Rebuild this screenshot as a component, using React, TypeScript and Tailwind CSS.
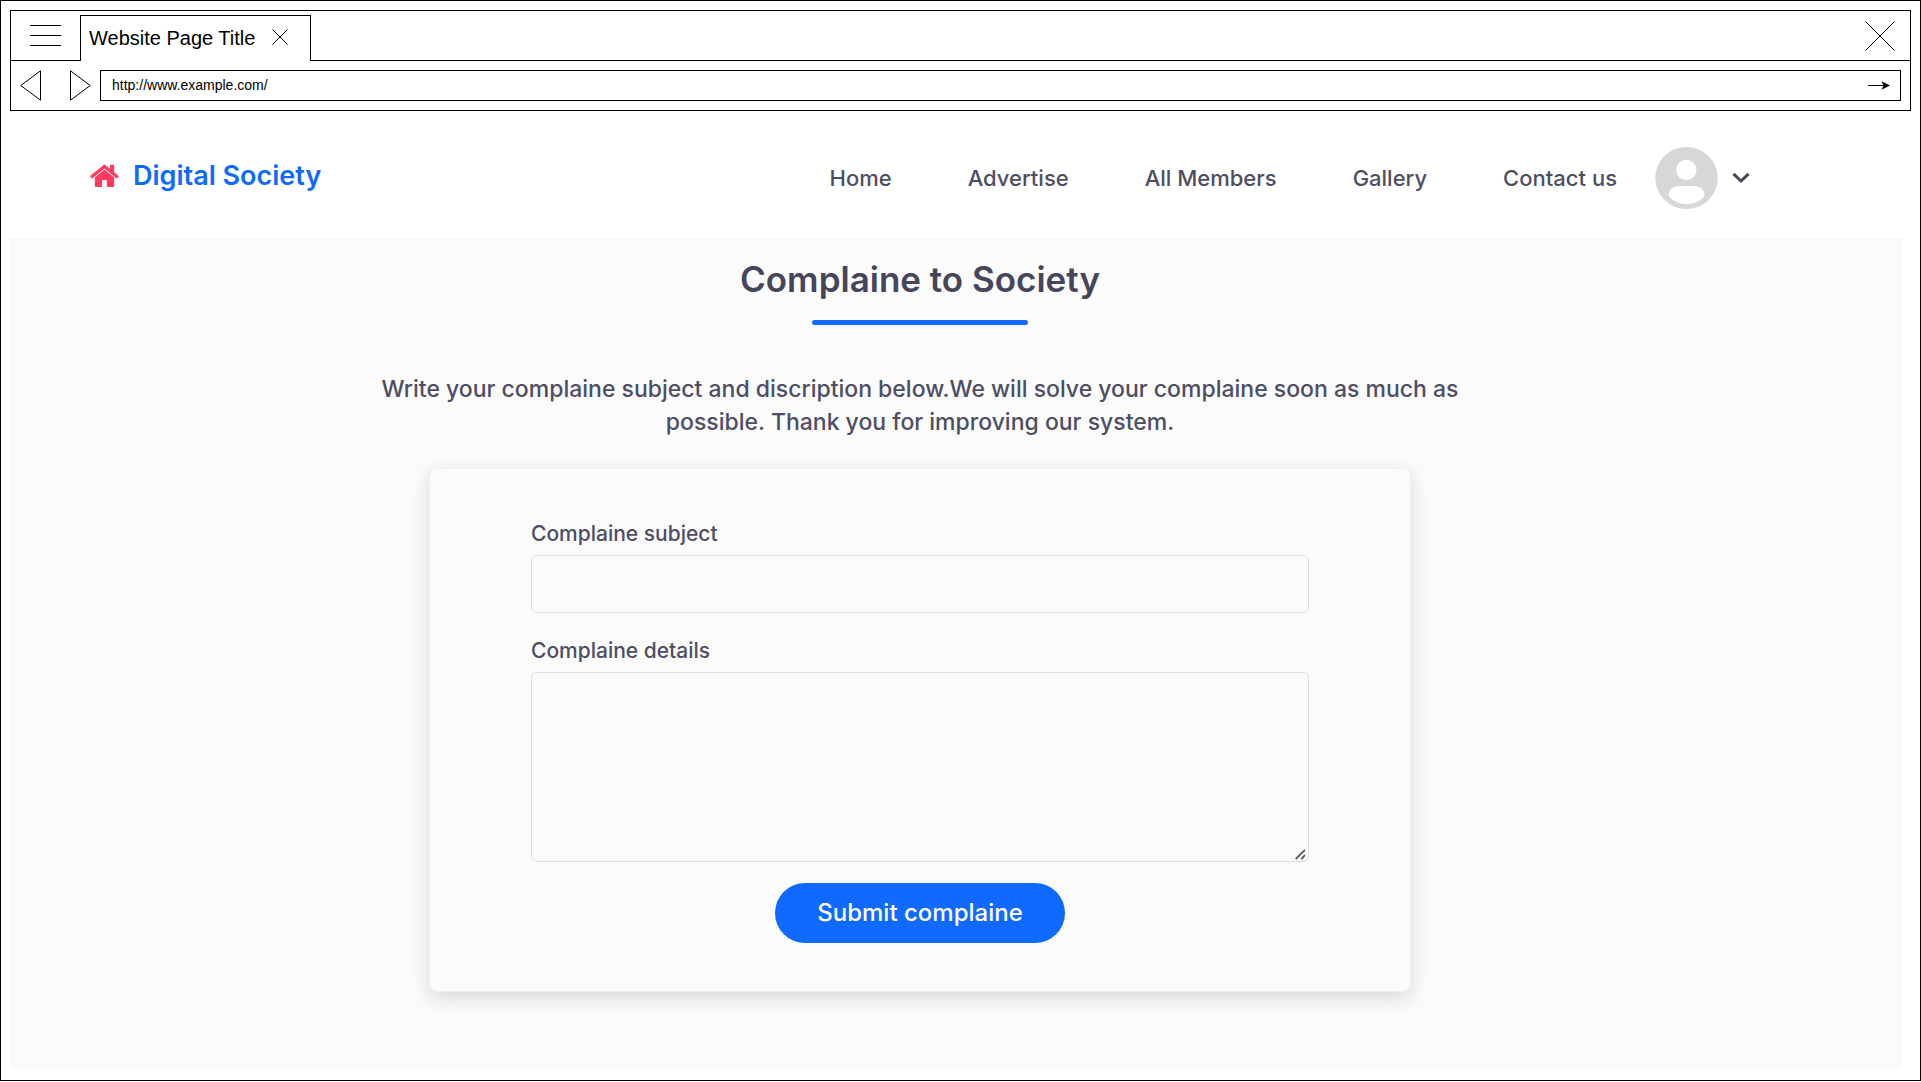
import React from "react";

const navLinks = ["Home", "Advertise", "All Members", "Gallery", "Contact us"];

function BrowserChrome() {
  return (
    <div className="border border-black font-['Liberation_Sans',sans-serif] text-black">
      <div className="flex h-[50px] items-stretch">
        <div className="flex w-[69px] items-center justify-center border-b border-black">
          <button type="button" aria-label="Menu">
            <svg width="31" height="22" viewBox="0 0 31 22" stroke="black" fill="none" shapeRendering="crispEdges">
              <path d="M0 .5h31M0 10.5h31M0 20.5h31" />
            </svg>
          </button>
        </div>
        <div className="mt-1 flex w-[231px] items-center gap-[17px] border-x border-t border-black pb-1 pl-2">
          <span className="pt-0.5 text-xl leading-6 whitespace-nowrap">Website Page Title</span>
          <button type="button" aria-label="Close tab">
            <svg width="16" height="16" viewBox="0 0 16 16" stroke="black" fill="none">
              <path d="M.5 .5l15 15M15.500 .5l-15 15" />
            </svg>
          </button>
        </div>
        <div className="flex flex-1 items-center justify-end border-b border-black pr-[15px]">
          <button type="button" aria-label="Close window">
            <svg width="30" height="30" viewBox="0 0 30 30" stroke="black" fill="none">
              <path d="M.5 .5l29 29M29.500 .5l-29 29" />
            </svg>
          </button>
        </div>
      </div>
      <div className="flex h-[49px] items-center pr-[9px] pl-[9px]">
        <button type="button" aria-label="Back" className="mr-7">
          <svg width="22" height="31" viewBox="0 0 22 31" stroke="black" fill="none">
            <path d="M20.500 .8v29.400L.8 15.500z" />
          </svg>
        </button>
        <button type="button" aria-label="Forward" className="mr-2">
          <svg width="22" height="31" viewBox="0 0 22 31" stroke="black" fill="none">
            <path d="M.5 .8v29.400L20.200 15.500z" />
          </svg>
        </button>
        <div className="flex h-[31px] flex-1 items-center border border-black pr-[10px] pl-[11px]">
          <input
            type="text"
            aria-label="Address"
            defaultValue="http://www.example.com/"
            className="min-w-0 flex-1 bg-transparent pb-0.5 text-sm leading-5 outline-none"
          />
          <button type="button" aria-label="Go">
            <svg width="22" height="9" viewBox="0 0 22 9">
              <path d="M0 4.500h16" stroke="black" />
              <path d="M22 4.500L13.500 8.800l2-4.300-2-4.300z" fill="black" />
            </svg>
          </button>
        </div>
      </div>
    </div>
  );
}

function SiteHeader() {
  return (
    <header className="mr-[9px] flex h-[127px] items-center justify-between pt-1.5 pr-[152px] pl-20">
      <a href="#" className="flex items-center gap-[14px] pb-1 text-[27px] leading-10 font-semibold text-[#106aff]">
        <svg width="29" height="24" viewBox="0 0 30 24" fill="#ff3a5c" aria-hidden="true">
          <path d="M14.300 5.900L5 13.600v8.600c0 .7.500 1.300 1.200 1.300h5.400c.5 0 .9-.4.900-.9v-5.500c0-.5.400-.9.900-.9h3.100c.5 0 .9.400.9.900v5.500c0 .5.400.9.900.9h5.400c.7 0 1.300-.6 1.300-1.300v-8.600l-9.300-7.700c-.4-.3-1-.3-1.400 0z" />
          <path d="M29.200 11.700L25 8.200V1c0-.4-.3-.7-.7-.7h-2.900c-.4 0-.7.300-.7.700v3.700L16.200.9c-.7-.6-1.800-.6-2.500 0L.5 11.700c-.3.300-.4.700-.1 1l1.300 1.600c.2.300.7.300 1 .1L14.300 4.800c.4-.3 1-.3 1.400 0l11.500 9.600c.3.200.8.200 1-.1l1.300-1.600c.3-.3.200-.700-.3-1z" />
        </svg>
        <span>Digital Society</span>
      </a>
      <div className="flex items-center">
        <nav className="flex gap-[76px] text-[22px] leading-8 font-medium text-[#4d4e63]">
          {navLinks.map((link) => (
            <a key={link} href="#" className="whitespace-nowrap">
              {link}
            </a>
          ))}
        </nav>
        <button type="button" aria-label="Account" className="ml-[38px] flex items-center gap-[14px]">
          <svg width="63" height="62" viewBox="0 0 63 62">
            <ellipse cx="31.500" cy="31" rx="31.300" ry="31" fill="#d7d7d7" />
            <circle cx="31.300" cy="23" r="10.200" fill="white" />
            <path d="M13.500 48c0-5.500 5-9 10.500-9h15c5.500 0 10.500 3.500 10.500 9 0 2.500-7 9-18 9s-18-6.500-18-9z" fill="white" />
          </svg>
          <svg width="18" height="12" viewBox="0 0 18 12" fill="none" stroke="#45465c" strokeWidth="3">
            <path d="M1.500 1.800L9 9l7.500-7.200" />
          </svg>
        </button>
      </div>
    </header>
  );
}

function ComplaintForm() {
  const field = "block w-full rounded-md border border-[#dedede] bg-[#fbfbfb] px-4 outline-none";
  return (
    <form
      onSubmit={(event) => event.preventDefault()}
      className="mt-[29px] flex w-full max-w-[982px] flex-col items-center rounded-lg border border-[#f0f0f0] bg-[#fbfbfb] px-[101px] pt-[49px] pb-12 text-[#4d4e63] shadow-[0_6px_20px_rgba(0,0,0,0.14)]"
    >
      <div className="w-full">
        <label htmlFor="subject" className="mb-[5px] block text-[21px] leading-8 font-medium">
          Complaine subject
        </label>
        <input id="subject" type="text" className={field + " h-[58px]"} />
      </div>
      <div className="mt-[22px] w-full">
        <label htmlFor="details" className="mb-[5px] block text-[21px] leading-8 font-medium">
          Complaine details
        </label>
        <div className="relative">
          <textarea
            id="details"
            className={field + " h-[190px] resize-y py-3 [&::-webkit-resizer]:bg-transparent"}
          />
          <svg
            className="pointer-events-none absolute right-[3px] bottom-[2px]"
            width="11"
            height="11"
            viewBox="0 0 11 11"
            stroke="#5a5a5a"
            strokeWidth="1.8"
            fill="none"
            aria-hidden="true"
          >
            <path d="M.7 10L10 .9M6.300 10L10 6.200" />
          </svg>
        </div>
      </div>
      <button
        type="submit"
        className="mt-[21px] h-[60px] rounded-full bg-[#106aff] px-[42px] text-2xl leading-8 font-medium whitespace-nowrap text-white"
      >
        Submit complaine
      </button>
    </form>
  );
}

export default function App() {
  return (
    <div className="min-h-screen bg-white pb-px font-[Inter,sans-serif]">
      <div className="flex min-h-[calc(100vh-1px)] flex-col border border-black px-[9px] pt-[9px] pb-[10px]">
        <BrowserChrome />
        <SiteHeader />
        <main className="mr-[9px] flex flex-1 flex-col items-center border-t border-[#f4f4f4] bg-[#fbfbfb] pt-4 pr-[72px] pb-16">
          <h1 className="text-[35px] leading-12 font-semibold text-[#45465c]">Complaine to Society</h1>
          <div className="mt-[17px] h-[5px] w-[216px] rounded-full bg-[#106aff]" />
          <p className="mt-12 max-w-[1130px] text-center text-[23px] leading-[33px] font-medium text-[#4d4e63]">
            Write your complaine subject and discription below.We will solve your complaine soon as much as possible.
            Thank you for improving our system.
          </p>
          <ComplaintForm />
        </main>
      </div>
    </div>
  );
}
